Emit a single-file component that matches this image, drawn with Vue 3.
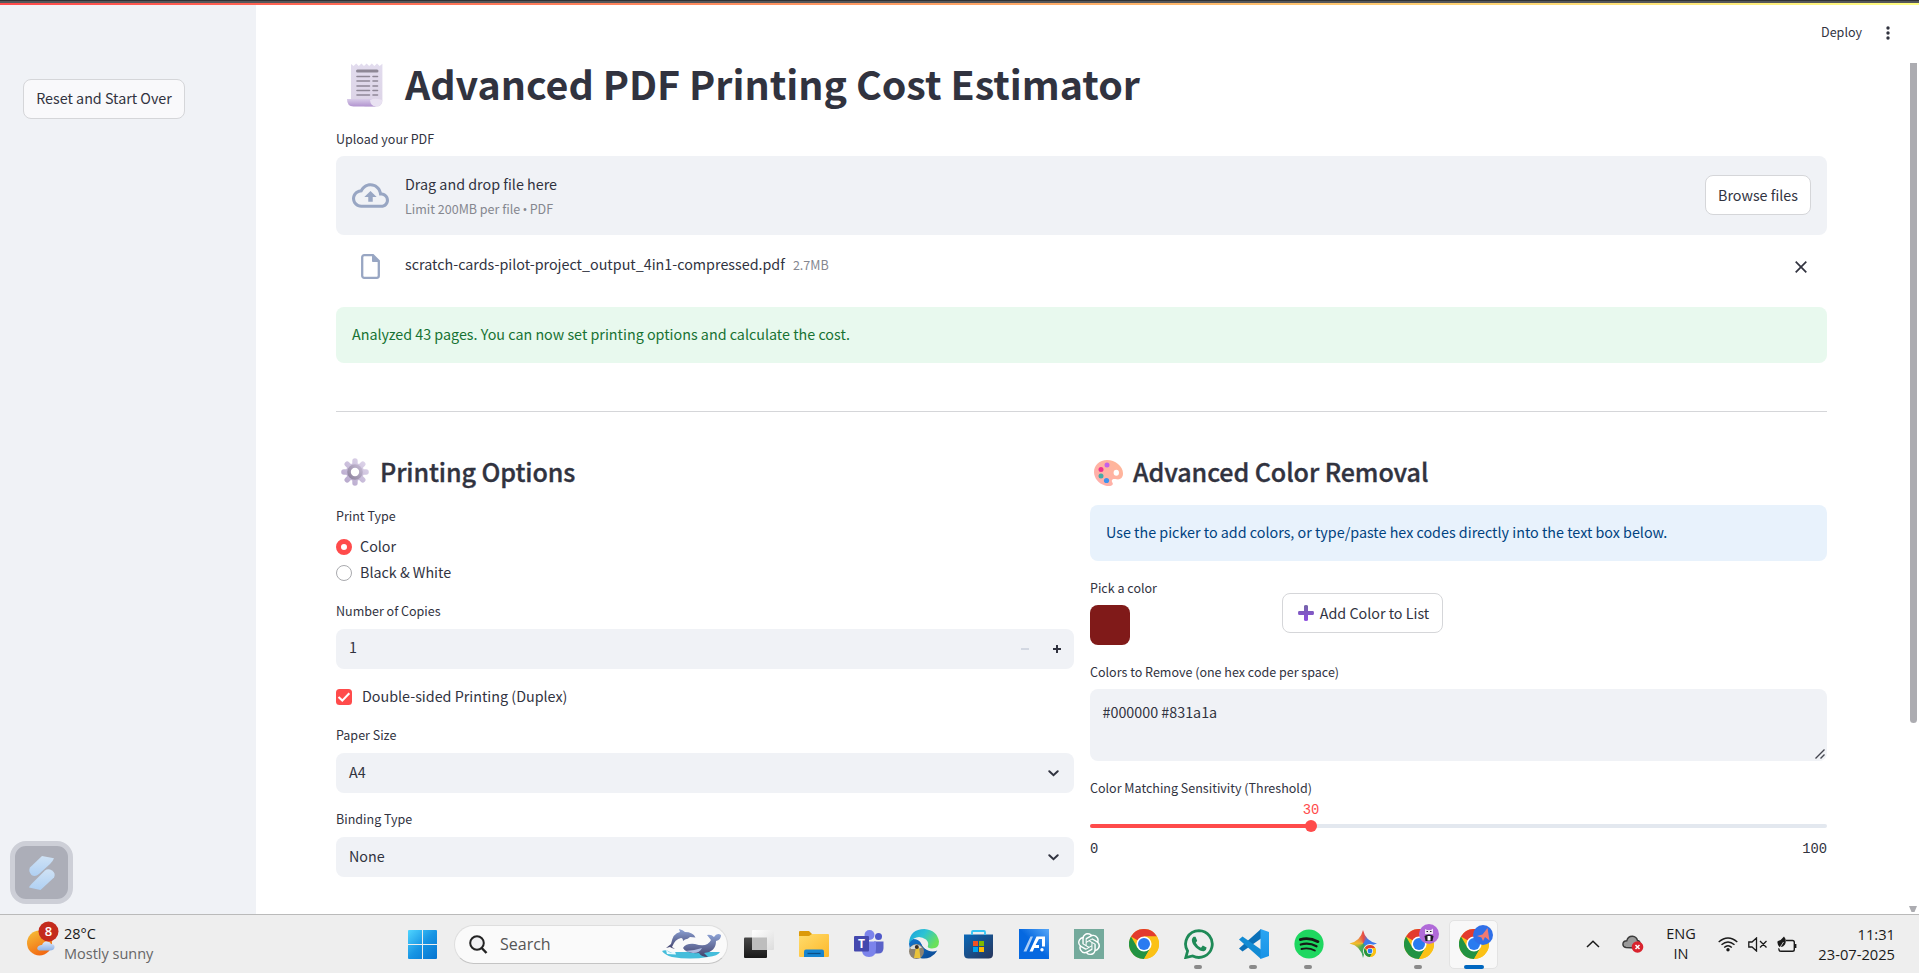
<script setup>
import { ref } from 'vue'

const copies = ref(1)
const printType = ref('Color')
const printTypes = ['Color', 'Black & White']
const removeColors = ref('#000000 #831a1a')
const threshold = ref(30)
</script>

<template>
  <div class="screen">
    <svg class="defs" width="0" height="0" aria-hidden="true">
      <defs>
        <linearGradient id="gPaper" x1="0" y1="0" x2="0" y2="1"><stop offset="0" stop-color="#e2dcee" /><stop offset="1" stop-color="#dcd3e6" /></linearGradient>
        <linearGradient id="gRoll" x1="0" y1="0" x2="0" y2="1"><stop offset="0" stop-color="#d8cce8" /><stop offset="1" stop-color="#b193cf" /></linearGradient>
        <linearGradient id="gGear" gradientUnits="userSpaceOnUse" x1="24" y1="3" x2="4" y2="25"><stop offset="0" stop-color="#ded5ea" /><stop offset="1" stop-color="#b7a8cc" /></linearGradient>
        <linearGradient id="gGearRing" x1="1" y1="0" x2="0" y2="1"><stop offset="0" stop-color="#c4b9d2" /><stop offset="1" stop-color="#8f849f" /></linearGradient>
        <linearGradient id="gPal" x1="1" y1="0" x2="0" y2="1"><stop offset="0" stop-color="#ffb795" /><stop offset="1" stop-color="#ffaeb0" /></linearGradient>
        <linearGradient id="gPlus" x1="0" y1="0" x2="0" y2="1"><stop offset="0" stop-color="#7464a8" /><stop offset="1" stop-color="#8e4ee0" /></linearGradient>
        <linearGradient id="gWin" x1="0" y1="0" x2="1" y2="1"><stop offset="0" stop-color="#4fd5ff" /><stop offset=".5" stop-color="#1795e4" /><stop offset="1" stop-color="#0473d0" /></linearGradient>
        <linearGradient id="gFold" x1="0" y1="0" x2="1" y2="1"><stop offset="0" stop-color="#ffdc6c" /><stop offset="1" stop-color="#fdb82a" /></linearGradient>
        <linearGradient id="gStore" x1="0" y1="0" x2="1" y2="1"><stop offset="0" stop-color="#0a68b8" /><stop offset="1" stop-color="#28355a" /></linearGradient>
        <linearGradient id="gAsus" x1="0" y1="1" x2="1" y2="0"><stop offset=".5" stop-color="#0568e0" /><stop offset="1" stop-color="#58a8f8" /></linearGradient>
        <linearGradient id="gEdge" x1="0" y1="0" x2="1" y2=".5"><stop offset="0" stop-color="#1b9fdc" /><stop offset=".5" stop-color="#2cc3d4" /><stop offset="1" stop-color="#6be05a" /></linearGradient>
        <linearGradient id="gEdge2" x1="0" y1="0" x2="1" y2="1"><stop offset="0" stop-color="#1177cf" /><stop offset="1" stop-color="#0c468f" /></linearGradient>
        <linearGradient id="gSun" x1="0" y1="0" x2=".5" y2="1"><stop offset="0" stop-color="#f6c33a" /><stop offset="1" stop-color="#f26a12" /></linearGradient>
        <linearGradient id="gCloud" x1="0" y1="0" x2="0" y2="1"><stop offset="0" stop-color="#dde9fb" /><stop offset="1" stop-color="#8fb2e6" /></linearGradient>
        <linearGradient id="gLogo" x1="0" y1="0" x2="0" y2="1"><stop offset="0" stop-color="#cfe2f5" /><stop offset="1" stop-color="#afd0f3" /></linearGradient>
        <linearGradient id="gWhale" x1="0" y1="0" x2="0" y2="1"><stop offset="0" stop-color="#8da3d6" /><stop offset="1" stop-color="#42426c" /></linearGradient>
        <linearGradient id="gTaskA" x1="0" y1="0" x2="0" y2="1"><stop offset="0" stop-color="#484848" /><stop offset="1" stop-color="#181818" /></linearGradient>
        <linearGradient id="gTaskB" x1="0" y1="0" x2="1" y2="1"><stop offset="0" stop-color="#ffffff" /><stop offset="1" stop-color="#dcdcdc" /></linearGradient>
        <linearGradient id="gVs" x1="0" y1="0" x2="0" y2="1"><stop offset="0" stop-color="#2aa5f2" /><stop offset="1" stop-color="#1a93e6" /></linearGradient>
        <symbol id="chrome" viewBox="0 0 30 30">
          <circle cx="15" cy="15" r="15" fill="#fbc116" />
          <path d="M15 15L2 7.5A15 15 0 0 1 28 7.5L15 7.5Z" fill="#e33b2e" />
          <path d="M2 7.5A15 15 0 0 0 15 30L21.5 18.7L8.5 18.7Z" fill="#229342" />
          <path d="M28 7.5A15 15 0 0 1 15 30L21.5 18.7L15 7.5Z" fill="#fbc116" />
          <circle cx="15" cy="15" r="7.6" fill="#fff" />
          <circle cx="15" cy="15" r="6" fill="#2a7bf0" />
        </symbol>
      </defs>
    </svg>

    <div class="topline"></div>
    <div class="decoration"></div>

    <div class="app">
      <aside class="sidebar">
        <button class="btn reset">Reset and Start Over</button>
        <div class="widget">
          <svg width="28" height="36" viewBox="0 0 28 36">
            <path d="M14 1L26 3.2Q25 6 22 9L11 19Q7 22.5 3.5 20Q0 16 2 12.5Z" fill="url(#gLogo)" />
            <path d="M12.5 35L1 32.5Q1.500 31 4 28.500L17 15.500Q20 13.200 24 15.500Q28 18 26 22.500Z" fill="url(#gLogo)" />
          </svg>
        </div>
      </aside>

      <main class="main">
        <div class="toolbar">
          <span>Deploy</span>
          <svg width="4" height="14" viewBox="0 0 4 14" fill="#31333f"><circle cx="2" cy="2" r="1.700" /><circle cx="2" cy="7" r="1.700" /><circle cx="2" cy="12" r="1.700" /></svg>
        </div>

        <div class="content">
          <h1>
            <svg class="receipt" width="36" height="44" viewBox="0 0 36 44">
              <path d="M4 1l2.600 2 2.600-2.400L11.800 3l2.600-2.400L17 3l2.600-2.400L22.200 3l2.600-2.400L27.400 3 30 .6 32.600 3 35.400 .8V38a5.500 5.500 0 0 1-5.500 5.500H18L4 37Z" fill="url(#gPaper)" />
              <path d="M0 36h25q-1 5 4 7.600H6.500Q0 43.500 0 36Z" fill="url(#gRoll)" />
              <path d="M23 37q.5 6 6 6.500 6-.5 6.400-6.500l-4-1q-4-1-8.400 1Z" fill="#e9e2f2" />
              <g stroke="#8e8796" stroke-linecap="round" fill="none"><path d="M10.500 8H30" stroke-width="3" /><path d="M10 13.500H22.500M26 13.500H30.500M10 18H22.500M26 18H30.500M10 23H22.500M26 23H30.500M10 27.500H22.500M26 27.500H30.500M10 32H22.500M26 32H30.500" stroke-width="1.600" /></g>
            </svg>
            <span>Advanced PDF Printing Cost Estimator</span>
          </h1>

          <label class="label upl">Upload your PDF</label>
          <div class="dropzone">
            <svg class="cloud" width="37" height="25" viewBox="0 0 24 16"><path d="M19.350 6.040C18.670 2.590 15.640 0 12 0 9.110 0 6.600 1.640 5.350 4.040 2.340 4.360 0 6.910 0 10c0 3.310 2.690 6 6 6h13c2.760 0 5-2.240 5-5 0-2.640-2.050-4.780-4.650-4.960zM19 14H6c-2.210 0-4-1.790-4-4 0-2.050 1.530-3.760 3.560-3.970l1.070-.11.5-.95C8.080 3.140 9.940 2 12 2c2.620 0 4.880 1.860 5.390 4.430l.3 1.500 1.530.11c1.560.1 2.780 1.410 2.780 2.960 0 1.650-1.350 3-3 3zM8 9h2.550v3h2.900V9H16l-4-4z" fill="#98a6c3" /></svg>
            <div class="droptext">
              <div>Drag and drop file here</div>
              <small>Limit 200MB per file <b>•</b> PDF</small>
            </div>
            <button class="btn browse">Browse files</button>
          </div>
          <div class="filerow">
            <svg class="file" width="19" height="25" viewBox="0 0 19 25" fill="none" stroke="#98a6c3" stroke-width="2.300"><path d="M1.200 3.200a2 2 0 0 1 2-2H12L17.800 7V21.800a2 2 0 0 1-2 2H3.200a2 2 0 0 1-2-2Z" /><path d="M11.500 1.500V7.500H17.800Z" fill="#98a6c3" stroke-width="1" /></svg>
            <span class="fname">scratch-cards-pilot-project_output_4in1-compressed.pdf</span>
            <span class="fsize">2.7MB</span>
            <svg class="close" width="12" height="12" viewBox="0 0 12 12" stroke="#31333f" stroke-width="1.700"><path d="M.7 .7L11.300 11.300M11.300 .7L.7 11.300" /></svg>
          </div>

          <div class="alert success">Analyzed 43 pages. You can now set printing options and calculate the cost.</div>
          <hr />

          <div class="columns">
            <section>
              <h2>
                <svg class="gear" width="28" height="28" viewBox="0 0 28 28">
                  <g stroke="url(#gGear)" stroke-width="5.400" stroke-linecap="round"><path d="M14 2.900V25.110M2.900 14.010H25.110M6.200 6.200L21.800 21.810M21.800 6.200L6.200 21.810" /></g>
                  <circle cx="14" cy="14" r="9" fill="url(#gGear)" />
                  <circle cx="14" cy="14" r="6" fill="#fff" stroke="url(#gGearRing)" stroke-width="3.600" />
                </svg>
                <span>Printing Options</span>
              </h2>
              <label class="label">Print Type</label>
              <div v-for="t in printTypes" :key="t" class="radio">
                <i :class="{ on: t === printType }"></i><span>{{ t }}</span>
              </div>
              <label class="label copies">Number of Copies</label>
              <div class="field num">
                <span>{{ copies }}</span>
                <svg class="minus" width="8" height="8" viewBox="0 0 8 8" fill="#d3d8e2"><path d="M0 3h8v2H0z" /></svg>
                <svg class="plus" width="8" height="8" viewBox="0 0 8 8" fill="#31333f"><path d="M3 0h2v3h3v2H5v3H3V5H0V3h3z" /></svg>
              </div>
              <div class="check">
                <svg width="16" height="16" viewBox="0 0 16 16"><rect width="16" height="16" rx="3.500" fill="#ff4b4b" /><path d="M2.500 8L6.300 11.600L13.300 4.200" fill="none" stroke="#fff" stroke-width="2.100" /></svg>
                <span>Double-sided Printing (Duplex)</span>
              </div>
              <label class="label">Paper Size</label>
              <div class="field">
                <span>A4</span>
                <svg class="chev" width="11" height="7" viewBox="0 0 11 7" fill="none" stroke="#31333f" stroke-width="2" stroke-linecap="round"><path d="M1.300 1.300L5.500 5.200L9.700 1.300" /></svg>
              </div>
              <label class="label second">Binding Type</label>
              <div class="field">
                <span>None</span>
                <svg class="chev" width="11" height="7" viewBox="0 0 11 7" fill="none" stroke="#31333f" stroke-width="2" stroke-linecap="round"><path d="M1.300 1.300L5.500 5.200L9.700 1.300" /></svg>
              </div>
            </section>

            <section class="right">
              <h2>
                <svg class="palette" width="29" height="26" viewBox="0 0 29 26">
                  <path d="M13 0C21 0 29 6 29 13.500C29 18 26 20 22.500 19.300C20 18.800 17.800 19 17.800 21C17.800 22.500 19.500 23 18.500 24.700C17.500 26.200 14 26.200 11 25.400C4.500 23.600 0 18 0 12C0 5 5.500 0 13 0Z" fill="url(#gPal)" />
                  <ellipse cx="22.300" cy="12.700" rx="2.700" ry="3" fill="#fff" />
                  <circle cx="13" cy="5" r="2.500" fill="#c560ea" /><circle cx="7" cy="9.500" r="2.500" fill="#f0328c" /><circle cx="7" cy="16" r="2.500" fill="#45aaa8" /><circle cx="12.500" cy="20.500" r="2.600" fill="#3d93ee" />
                </svg>
                <span>Advanced Color Removal</span>
              </h2>
              <div class="alert info">Use the picker to add colors, or type/paste hex codes directly into the text box below.</div>
              <div class="pickrow">
                <div class="pick">
                  <label class="label">Pick a color</label>
                  <div class="swatch"></div>
                </div>
                <button class="btn add">
                  <svg width="16" height="16" viewBox="0 0 16 16"><path d="M6 1.200Q6 0 8 0T10 1.200V6H15Q16 6 16 8T15 10H10V15Q10 16 8 16T6 15V10H1Q0 10 0 8T1 6H6Z" fill="url(#gPlus)" /></svg>
                  <span>Add Color to List</span>
                </button>
              </div>
              <label class="label">Colors to Remove (one hex code per space)</label>
              <div class="area">
                {{ removeColors }}
                <svg class="grip" width="10" height="10" viewBox="0 0 10 10" stroke="#44464f" stroke-width="1.400"><path d="M.5 9.500L9.500 .5M5.500 9.500L9.500 5.500" /></svg>
              </div>
              <label class="label sens">Color Matching Sensitivity (Threshold)</label>
              <div class="slider">
                <div class="track">
                  <div class="fill" :style="{ width: threshold + '%' }"></div>
                  <div class="knob" :style="{ left: threshold + '%' }"><span>{{ threshold }}</span></div>
                </div>
                <div class="ends"><span>0</span><span>100</span></div>
              </div>
            </section>
          </div>
        </div>
        <div class="scrollbar">
          <div class="bar"></div>
          <svg width="8" height="6" viewBox="0 0 8 6"><path d="M0 0H8L5.500 6H2.500Z" fill="#acacb1" /></svg>
        </div>
      </main>
    </div>

    <footer class="taskbar">
      <div class="weather">
        <svg width="32" height="35" viewBox="0 0 32 35">
          <circle cx="12.500" cy="22" r="12.500" fill="url(#gSun)" />
          <path d="M12 29.500Q9 28 11 25.500Q13 23.500 15 24Q17 19.500 21 20.500Q23.500 21 24 23Q28 23 27.500 26.500Q27 29.500 23 29.500Z" fill="url(#gCloud)" />
          <circle cx="21.500" cy="10.500" r="10" fill="#c42b1c" />
          <text x="21.500" y="15" text-anchor="middle" font-family="Open Sans, sans-serif" font-weight="600" font-size="13" fill="#fff">8</text>
        </svg>
        <div class="wtext"><div>28°C</div><div class="dim">Mostly sunny</div></div>
      </div>

      <div class="apps">
        <div class="slot win"><svg width="29" height="29" viewBox="0 0 29 29"><path d="M1 0H14V14H0V1Q0 0 1 0ZM15 0H28Q29 0 29 1V14H15ZM0 15H14V29H1Q0 29 0 28ZM15 15H29V28Q29 29 28 29H15Z" fill="url(#gWin)" /></svg></div>
        <div class="search">
          <svg class="mag" width="19" height="19" viewBox="0 0 19 19" fill="#f0f0f2" stroke="#222" stroke-width="2"><circle cx="8" cy="8" r="6.800" /><path d="M12.700 13L17.500 18" stroke-width="2.500" /></svg>
          <span>Search</span>
          <svg class="sea" width="60" height="30" viewBox="0 0 60 30">
            <path d="M0 22Q4 20 8 23H58Q56 27 46 28Q28 31 10 28Q3 26 0 22Z" fill="#45bddb" />
            <path d="M4 21L8 23.500L13 22.500L14 25.500L5 25Z" fill="#e9faff" />
            <path d="M9 15Q11 4 18 3L17 0Q21 1 23 3Q31 3 33.500 8.500L28 8Q26 10 23 10.500L21 12Q21 9 19 9Q13 10 10 18L13 20Q9 19 8 18L4 19Z" fill="url(#gWhale)" />
            <path d="M21 19Q24 14 33 15Q45 19 49 11L45 6Q49 5 52 8Q55 3 59 6Q59 11 54 12Q54 23 42 24L46 28Q39 28 37 24Q24 25 21 19Z" fill="url(#gWhale)" />
            <path d="M23 22Q31 22 40 19Q38 24 31 24Z" fill="#aebbe0" />
          </svg>
        </div>
        <div class="slot"><svg width="30" height="29" viewBox="0 0 30 29"><rect x="0" y="7.500" width="23" height="20.500" rx="1" fill="url(#gTaskA)" /><rect x="8" y="0" width="22" height="20" rx="1" fill="url(#gTaskB)" /><path d="M8 7.500H23V20H8Z" fill="#bdbdbd" /></svg></div>
        <div class="slot"><svg width="30" height="28" viewBox="0 0 30 28"><path d="M0 2Q0 1 1 1H10L13 4V9H0Z" fill="#dc9a0a" /><path d="M0 6H10L13 4H29Q30 4 30 5V26Q30 27 29 27H1Q0 27 0 26Z" fill="url(#gFold)" /><path d="M5 27V21.500Q5 19.500 7 19.500H23Q25 19.500 25 21.500V27Z" fill="#1684d0" /><path d="M8.500 23.500H21.500" stroke="#0b4f86" stroke-width="1.300" /></svg></div>
        <div class="slot"><svg width="30" height="28" viewBox="0 0 30 28"><circle cx="15.500" cy="5" r="5" fill="#7b83eb" /><circle cx="24.500" cy="6.500" r="3.500" fill="#4f58c8" /><path d="M20 11.500H29.500V18Q29.500 23.500 24 23.500H20Z" fill="#5a62c9" /><path d="M8 11.500H22V19Q22 27 15 27T8 20Z" fill="#7b83eb" /><rect x="0" y="6" width="15" height="15.500" rx="1" fill="#4448ae" /><text x="7.500" y="18.300" text-anchor="middle" font-family="Open Sans, sans-serif" font-weight="700" font-size="12" fill="#fff">T</text></svg></div>
        <div class="slot"><svg width="30" height="30" viewBox="0 0 30 30">
          <path d="M0 15A15 15 0 0 0 28.300 21.500Q24 23.500 19 21.500Q14.500 19.500 12.500 15Q10 10 4 10Q0 12 0 15Z" fill="url(#gEdge2)" />
          <path d="M0 14Q1 0 15.500 0Q28 1 30 12.500Q30 19.500 23 19.500Q18.500 19.500 18.500 17.500Q20.500 14 17 10.500Q8 4 0 14Z" fill="url(#gEdge)" />
          <path d="M12.500 14.500Q15 10.500 18 13.500Q19.500 15.500 18.500 17.800Q20 20.500 27 20Q23 22.300 18.500 20.800Q14 19 12.500 14.500Z" fill="#eee" />
          <circle cx="7.500" cy="22.500" r="7.500" fill="#8b8273" /><path d="M1 18.500Q7 12.500 13 18.500L9 20H2Z" fill="#d8dbd7" /><path d="M7 18H10L11.500 29H5Z" fill="#e9c33b" /><circle cx="7.800" cy="18" r="2" fill="#382f2a" />
        </svg></div>
        <div class="slot"><svg width="29" height="30" viewBox="0 0 29 30"><path d="M0 5.500H29V25Q29 29.500 24.500 29.500H4.500Q0 29.500 0 25Z" fill="url(#gStore)" /><path d="M8 6V3Q8 2 9 2H20Q21 2 21 3V6" fill="none" stroke="#36c5f4" stroke-width="1.800" /><path d="M9 12h5v5H9z" fill="#f25022" /><path d="M15 12h5v5h-5z" fill="#7fba00" /><path d="M9 18h5v5H9z" fill="#00a4ef" /><path d="M15 18h5v5h-5z" fill="#ffb900" /></svg></div>
        <div class="slot"><svg width="30" height="30" viewBox="0 0 30 30"><rect width="30" height="30" fill="url(#gAsus)" /><path d="M4.500 22.500H7.500L14 7.500H11.500Z" fill="#a9cdf8" /><path d="M10.500 22.500H13.800L15.300 19H20V16H16.600L20 10H23V17.500H26V7.500H17.500Z" fill="#fff" /><circle cx="23" cy="20.800" r="1.700" fill="#fff" /></svg></div>
        <div class="slot"><svg width="30" height="30" viewBox="0 0 30 30"><rect width="30" height="30" fill="#74aa9c" /><g transform="translate(4 4) scale(.92)"><path fill="#fff" d="M22.282 9.821a5.985 5.985 0 0 0-.516-4.910 6.046 6.046 0 0 0-6.510-2.900A6.065 6.065 0 0 0 4.981 4.182a5.985 5.985 0 0 0-3.998 2.900 6.046 6.046 0 0 0 .743 7.097 5.980 5.980 0 0 0 .510 4.911 6.051 6.051 0 0 0 6.515 2.900A5.985 5.985 0 0 0 13.260 24a6.056 6.056 0 0 0 5.772-4.206 5.990 5.990 0 0 0 3.997-2.900 6.056 6.056 0 0 0-.747-7.073zM13.260 22.430a4.476 4.476 0 0 1-2.876-1.040l.141-.081 4.779-2.758a.795.795 0 0 0 .392-.681v-6.737l2.020 1.168a.071.071 0 0 1 .038.052v5.583a4.504 4.504 0 0 1-4.494 4.494zM3.600 18.304a4.470 4.470 0 0 1-.535-3.014l.142.085 4.783 2.759a.771.771 0 0 0 .780 0l5.843-3.369v2.332a.080.080 0 0 1-.033.062L9.740 19.950a4.500 4.500 0 0 1-6.140-1.646zM2.340 7.896a4.485 4.485 0 0 1 2.366-1.973V11.600a.766.766 0 0 0 .388.677l5.815 3.354-2.020 1.168a.076.076 0 0 1-.071 0l-4.830-2.786A4.504 4.504 0 0 1 2.340 7.896zm16.597 3.855l-5.833-3.387L15.119 7.200a.076.076 0 0 1 .071 0l4.830 2.791a4.494 4.494 0 0 1-.676 8.105v-5.678a.790.790 0 0 0-.407-.667zm2.010-3.023l-.141-.085-4.774-2.782a.776.776 0 0 0-.785 0L9.409 9.230V6.897a.066.066 0 0 1 .028-.061l4.830-2.787a4.500 4.500 0 0 1 6.680 4.660zm-12.640 4.135l-2.020-1.164a.080.080 0 0 1-.038-.057V6.075a4.500 4.500 0 0 1 7.375-3.453l-.142.080L8.704 5.460a.795.795 0 0 0-.393.681zm1.097-2.365l2.602-1.500 2.607 1.500v2.999l-2.597 1.500-2.607-1.500z" /></g></svg></div>
        <div class="slot"><svg width="30" height="30"><use href="#chrome" /></svg></div>
        <div class="slot run"><svg width="30" height="30" viewBox="0 0 30 30"><path d="M15 1.600A13.400 13.400 0 1 1 8.700 26.900L1.800 28.500L3.600 22A13.400 13.400 0 0 1 15 1.600Z" fill="none" stroke="#1f8a57" stroke-width="2.800" /><path d="M9.500 7.800Q8 9 7.800 11Q8 15 12 18.700Q16.500 22.500 20 22.200Q22.500 21.500 22.600 18.500L18.800 16.600L17 18.700Q13.500 17.300 11.800 13.700L13.200 11.800L11.500 7.800Z" fill="#1f8a57" /></svg></div>
        <div class="slot run"><svg width="30" height="30" viewBox="0 0 30 30"><path d="M22 0V9.500L3.500 22.500L0 19.500Z" fill="#0a70b8" /><path d="M0 10.500L3.500 7.500L22 20.500V30Z" fill="#128bd4" /><path d="M21.500 0L30 3V27L21.500 30Z" fill="url(#gVs)" /></svg></div>
        <div class="slot run"><svg width="30" height="30" viewBox="0 0 30 30"><circle cx="15" cy="15" r="14.600" fill="#1ed760" /><g fill="none" stroke="#161a17" stroke-linecap="round"><path d="M6.300 10.600Q15 8 24 12.700" stroke-width="2.700" /><path d="M6.800 15.500Q15 13.200 22.500 17.200" stroke-width="2.300" /><path d="M7.500 20Q14.500 18.200 20.800 21.500" stroke-width="1.900" /></g></svg></div>
        <div class="slot"><div class="spark"></div><svg class="sparkchrome" width="14" height="14"><circle cx="7" cy="7" r="7" fill="#eee" /><use href="#chrome" x="1" y="1" width="12" height="12" /></svg></div>
        <div class="slot run">
          <svg width="30" height="30"><use href="#chrome" /></svg>
          <svg class="badge" width="20" height="20" viewBox="0 0 20 20"><circle cx="10" cy="10" r="10" fill="#b06ad8" /><path d="M6 5L8 6H12L14 4.500V10H6Z" fill="#efe8f2" /><path d="M5.500 12Q10 9 14.500 12L13.500 17H6.500Z" fill="#1e1b22" /><path d="M8.500 12H11.500V16.500H8.500Z" fill="#fff" /><path d="M7.500 7.500H9M11 7.500H12.500" stroke="#222" stroke-width="1.200" /></svg>
        </div>
        <div class="slot run active">
          <svg width="30" height="30"><use href="#chrome" /></svg>
          <svg class="badge" width="20" height="20" viewBox="0 0 20 20"><circle cx="10" cy="10" r="10" fill="#2f6fe8" /><path d="M14.500 3L9.500 9.500L4 11L8.500 12.500L10 16L12 12L16.500 15.500Z" fill="#f17a72" /></svg>
        </div>
      </div>

      <div class="tray">
        <svg class="up" width="14" height="8" viewBox="0 0 14 8" fill="none" stroke="#1a1a1a" stroke-width="1.500"><path d="M1 7L7 1.200L13 7" /></svg>
        <svg class="drive" width="22" height="18" viewBox="0 0 22 18"><path d="M4 12.500Q.8 12 .9 9Q1.200 5.800 4.800 5.700Q6 1 10.500 1.200Q14.500 1.500 15.500 5.500Q18.500 6 18 10L13 13Z" fill="#9a9a9a" stroke="#3a3a3a" stroke-width="1.400" /><circle cx="15.500" cy="12" r="5.800" fill="#d9232e" /><path d="M13.500 10L17.500 14M17.500 10L13.500 14" stroke="#fff" stroke-width="1.500" /></svg>
        <div class="lang"><div>ENG</div><div>IN</div></div>
        <svg class="wifi" width="20" height="15" viewBox="0 0 20 15" fill="none" stroke="#1a1a1a" stroke-width="1.400"><path d="M.7 5Q10-3 19.300 5M3.500 7.800Q10 2 16.500 7.800M6.200 10.500Q10 7 13.800 10.500" /><circle cx="10" cy="12.700" r="1.700" fill="#1a1a1a" stroke="none" /></svg>
        <svg class="vol" width="20" height="15" viewBox="0 0 20 15" fill="none" stroke="#1a1a1a" stroke-width="1.300"><path d="M.8 5H4L8.500 1V14L4 10H.8ZM12 4L18.500 10.500M18.500 4L12 10.500" /></svg>
        <svg class="bat" width="20" height="17" viewBox="0 0 20 17" fill="none" stroke="#1a1a1a" stroke-width="1.400"><path d="M9 4.500H15.500Q17.300 4.500 17.300 6.300V13.500Q17.300 15.300 15.500 15.300H4Q2 15.300 2 13.500V12M18.700 8V12" /><path d="M7 .5Q10 4 8 8.500Q6 11.500 2.500 11Q-.5 7.500 .8 5Q4 4.500 7 .5Z" fill="#1a1a1a" stroke="none" /><path d="M2 13L6.500 6" stroke="#eee" stroke-width=".8" /></svg>
        <div class="clock"><div>11:31</div><div>23-07-2025</div></div>
      </div>
    </footer>
  </div>
</template>

<style>
html, body { margin: 0; overflow: hidden; }
</style>

<style scoped>
* { box-sizing: border-box; }
.screen { width: 1919px; height: 973px; display: flex; flex-direction: column; background: #fff; color: #31333f; font-family: "Noto Sans CJK SC", "Open Sans", sans-serif; font-size: 14.32px; overflow: hidden; }
svg { display: block; flex: none; }
.defs { position: absolute; }
.topline { height: 3px; background: linear-gradient(#303234 0 1px, #56585b 1px); flex: none; }
.decoration { height: 2px; background: linear-gradient(90deg, #ff4b4b, #fffd80); flex: none; }
.app { height: 909px; display: flex; flex: none; }
.sidebar { width: 256px; background: #f0f2f6; display: flex; flex-direction: column; justify-content: space-between; padding: 74px 0 10px 23px; }
.btn { height: 40px; border: 1px solid #d5d6d9; border-radius: 8px; background: #fff; color: #31333f; font: inherit; padding: 0 0 2px; line-height: 36px; display: flex; align-items: center; justify-content: center; white-space: nowrap; }
.reset { width: 162px; background: #f9f9fb; }
.widget { width: 63px; height: 63px; margin-left: -13px; border-radius: 16px; border: 5px solid #cdcfd7; background: #acaeb8; display: flex; align-items: center; justify-content: center; }
.main { flex: 1; display: grid; grid-template-columns: 80px 1491px 1fr; grid-template-rows: 51px 1fr; }
.toolbar { grid-column: 1 / -1; display: flex; align-items: center; justify-content: flex-end; gap: 24px; padding: 5px 29px 0 0; height: 51px; font-size: 12.53px; }
.toolbar span { margin-top: -3px; }
.content { grid-column: 2; display: flex; flex-direction: column; }
h1, h2 { margin: 0; display: flex; align-items: center; white-space: nowrap; }
h1 { height: 53px; font-size: 39.4px; font-weight: 700; line-height: 53px; }
.receipt { margin: 5px 22px 0 11px; }
.label { display: block; height: 29px; line-height: 21px; font-size: 12.53px; white-space: nowrap; }
.label.upl { margin-top: 19px; height: 28px; }
.dropzone { height: 79px; background: #f0f2f6; border-radius: 8px; display: flex; align-items: center; padding: 0 16px; }
.cloud { margin-top: 0; }
.droptext { margin-left: 16px; flex: 1; line-height: 24px; }
.droptext small { display: block; font-size: 12.53px; color: #85878f; margin: 1px 0 -1px; }
.droptext b { font: 400 13px/1 "Open Sans", sans-serif; margin: 0 -.5px; }
.browse { width: 106px; margin-top: -1px; padding-bottom: 1px; }
.filerow { height: 72px; padding: 0 20px 9px 25px; display: flex; align-items: center; }
.fname { margin: -6px 0 0 25px; }
.fsize { margin: -4px 0 0 8px; font-size: 12.53px; color: #85878f; flex: 1; }
.alert { height: 56px; border-radius: 8px; padding: 0 16px; line-height: 54px; white-space: nowrap; flex: none; }
.success { background: #e8f9ee; color: #177233; }
.info { background: #e8f2fc; color: #004280; margin-top: 14px; margin-bottom: 15px; }
hr { width: 100%; height: 1px; border: 0; background: #d5d6d9; margin: 48px 0 39px; flex: none; }
.columns { display: grid; grid-template-columns: 738px 737px; gap: 16px; }
h2 { height: 40px; line-height: 40px; font-size: 25.07px; font-weight: 500; letter-spacing: -.08px; -webkit-text-stroke: .35px #31333f; }
.gear { margin: 2px 11px 0 5px; }
.palette { margin: 4px 10px 0 4px; }
h2 + .label { margin-top: 14px; }
.right .label { padding-top: 1px; }
.radio { height: 26px; display: flex; align-items: center; gap: 8px; line-height: 24px; }
.radio span { margin-top: -2px; }
.radio i { width: 16px; height: 16px; border-radius: 50%; border: 1px solid #a9aaae; background: #fff; }
.radio i.on { border: 5px solid #ff4b4b; }
.copies { margin-top: 14px; }
.field { height: 40px; background: #f0f2f6; border-radius: 8px; display: flex; align-items: center; padding: 0 13px; line-height: 24px; }
.field span { flex: 1; margin-top: -2px; }
.field.num span { margin-top: -4px; }
.minus { margin-right: 24px; }
.chev { margin-right: 2px; }
.check { height: 24px; margin: 16px 0 15px; display: flex; align-items: center; gap: 10px; line-height: 24px; }
.check span { margin-top: -2px; }
.second { margin-top: 15px; }
.pickrow { display: flex; height: 84px; }
.pick { width: 192px; }
.swatch { width: 40px; height: 40px; border-radius: 8px; background: #801a19; }
.add { width: 161px; margin-top: 17px; gap: 6px; padding-left: 2px; padding-bottom: 0; }
.area { position: relative; height: 72px; border-radius: 8px; background: #f0f2f6; padding: 11px 12px 9px 12.5px; line-height: 24px; }
.grip { position: absolute; right: 2px; bottom: 2px; }
.label.sens { margin-top: 15px; height: 48px; }
.slider { font-family: "Liberation Mono", monospace; font-size: 13.8px; }
.track { position: relative; height: 4px; border-radius: 2px; background: #e3e8ef; }
.fill { height: 4px; border-radius: 2px 0 0 2px; background: #ff4b4b; }
.knob { position: absolute; top: -4px; width: 12px; height: 12px; margin-left: -6px; border-radius: 50%; background: #ff4b4b; color: #ff4b4b; display: flex; justify-content: center; }
.knob span { position: absolute; bottom: 13px; line-height: 16px; }
.ends { display: flex; justify-content: space-between; margin-top: 14px; line-height: 16px; }
.scrollbar { display: flex; flex-direction: column; justify-content: space-between; align-items: flex-end; padding: 7px 2px 2px 0; }
.bar { width: 7px; height: 660px; background: #acacb1; border-radius: 0 0 4px 4px; }
.taskbar { height: 59px; border-top: 1px solid #bababa; background: #eee; display: flex; flex: none; font-family: "Open Sans", "Noto Sans", sans-serif; font-size: 14.5px; color: #1a1a1a; }
.weather { width: 395px; display: flex; padding: 6px 0 0 27px; gap: 5px; line-height: 20px; }
.wtext { margin-top: 3px; }
.dim { color: #666; }
.apps { display: flex; align-items: center; }
.slot { position: relative; width: 49px; height: 49px; margin-right: 6px; border-radius: 5px; display: flex; align-items: center; justify-content: center; }
.slot.win { margin: 0 7px 0 3px; }
.slot.active { background: #f8f8f8; border: 1px solid #e3e3e3; }
.run::after { content: ""; position: absolute; bottom: 0; left: 20px; width: 8px; height: 4px; border-radius: 2px; background: #8a8a8a; }
.active::after { left: 14px; width: 20px; background: #0067c0; bottom: -1px; }
.badge { position: absolute; top: 4px; right: 4px; }
.search { width: 274px; height: 39px; margin-right: 6px; border-radius: 20px; background: #fafafa; border: 1px solid #dedede; border-bottom-color: #c4c4c4; display: flex; align-items: center; color: #555; }
.mag { margin: 0 12px 0 14px; }
.search span { flex: 1; font-size: 16px; }
.sea { margin-right: 5px; }
.spark { width: 30px; height: 30px; background: conic-gradient(from 0deg at 48% 48%, #e94d43, #4478e8 45deg, #3c7bed 110deg, #3aa660 180deg, #53ad4f 215deg, #f2bc2b 270deg, #ea8c45 315deg, #e94d43); clip-path: path("M14.5 1Q17 12 28.5 14.5Q17 17 14.5 29Q12.5 17 1 14.5Q12 12 14.5 1Z"); }
.sparkchrome { position: absolute; left: 24px; top: 24px; }
.tray { margin-left: auto; padding-right: 24px; display: flex; align-items: center; line-height: 20px; }
.drive { margin: 0 22px 0 22px; }
.lang { width: 30px; text-align: center; }
.wifi { margin-left: 22px; }
.vol { margin-left: 10px; }
.bat { margin: 0 20px 0 9px; }
.clock { text-align: right; width: 78px; font-size: 14.7px; }
</style>
